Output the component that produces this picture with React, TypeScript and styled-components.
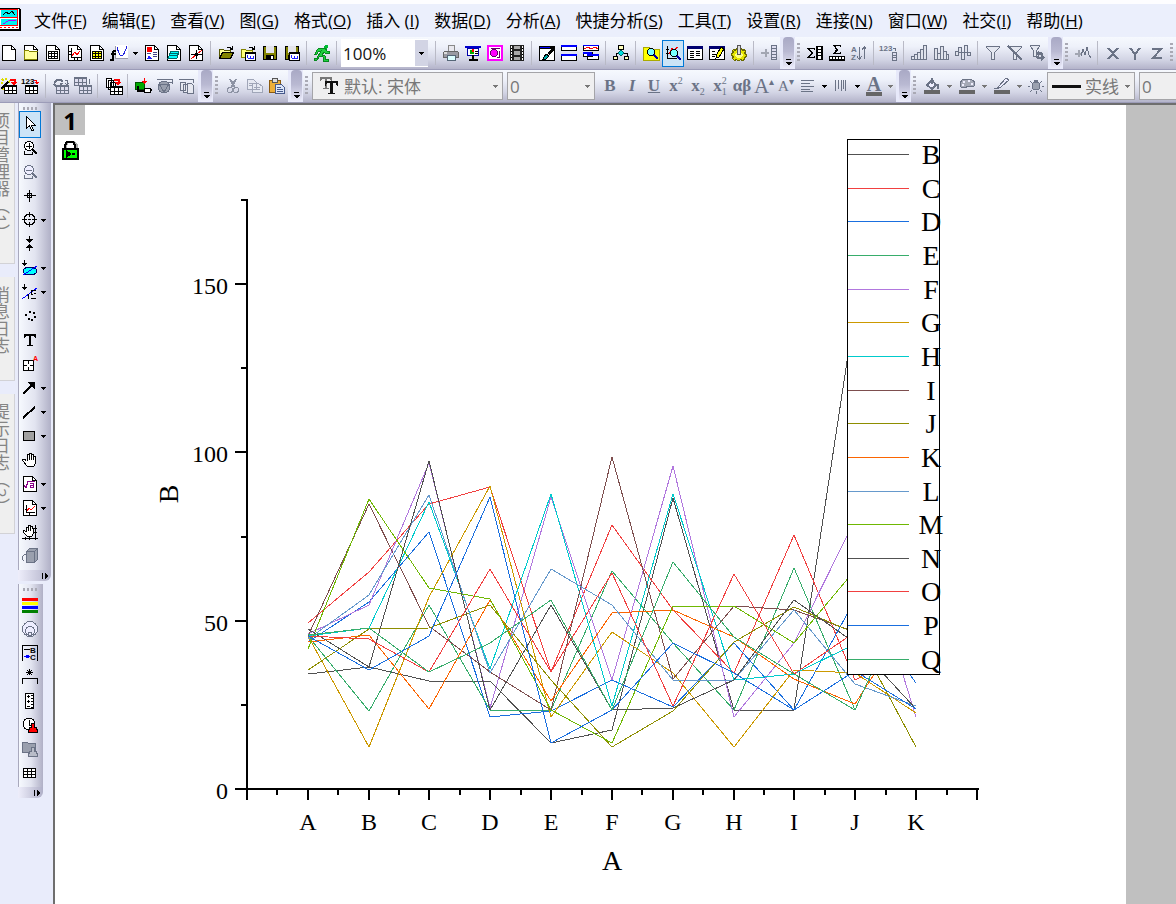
import React from "react";
import styled, { createGlobalStyle, css } from "styled-components";

const Global = createGlobalStyle`
  * { box-sizing: border-box; }
  html, body { margin: 0; padding: 0; }
  body { background: #e9ecfb; overflow: hidden; }
  button, select { font: inherit; color: inherit; margin: 0; }
`;

const UI_FONT = `"Open Sans", "Noto Sans CJK SC", sans-serif`;
const GREY = "#6b7386";
const INK = "#000";

/* ---------- icons ---------- */

type PProps = { d: string; f?: string; s?: string; w?: number };
const P = ({ d, f = "none", s = "none", w = 1 }: PProps) => (
  <path d={d} fill={f} stroke={s} strokeWidth={w} />
);
const L = ({ d, s = INK, w = 1 }: { d: string; s?: string; w?: number }) => <P d={d} s={s} w={w} />;
const T = ({ x, y, size, c = INK, children }: { x: number; y: number; size: number; c?: string; children: string }) => (
  <text x={x} y={y} fontSize={size} fill={c} fontWeight="bold" fontFamily="Liberation Sans, sans-serif">
    {children}
  </text>
);
const Doc = () => (
  <>
    <P d="M1.5.5h9l4 4v11h-13z" f="#fff" s={INK} />
    <L d="M10.5 1v3.500h4" />
  </>
);
const Floppy = () => (
  <>
    <P d="M1.500 1.500h13v13h-13z" f="#848400" s={INK} />
    <P d="M4 1h8v7H4z" f="#e4e4ea" />
    <P d="M4 10h8v5H4z" f={INK} />
    <P d="M9 11h2v3H9z" f="#fff" />
  </>
);
const Sheet = ({ x, y, c = INK, f = "#fff" }: { x: number; y: number; c?: string; f?: string }) => (
  <g transform={`translate(${x} ${y})`}>
    <P d="M.5.5h12v8h-12z" f={f} s={c} />
    <P d="M0 0h13v2H0z" f={c} />
    <L d="M4.500 0v8M8.500 0v8M0 5.500h12" s={c} />
  </g>
);
const BookGrid = ({ f }: { f: string }) => (
  <>
    <P d="M3.500 6.500h9v7h-9z" f={f} s={INK} />
    <L d="M6.500 6v8M9.500 6v8M3 8.500h10M3 11.500h10" />
  </>
);
const RedHook = () => (
  <>
    <L d="M9 1.500h4.500V5" s="#f00" w={2} />
    <P d="M10 4h6l-3 4z" f="#f00" />
  </>
);
const Lens = ({ x, y }: { x: number; y: number }) => (
  <>
    <circle cx={x} cy={y} r={3.500} fill="#7ff" stroke={INK} />
    <L d={`M${x + 3} ${y + 3}l4 4`} s="#0000a0" w={2} />
  </>
);
const MiniWindow = () => (
  <>
    <P d="M5.500 7.500h10v8h-10z" f="#fff" s={INK} />
    <P d="M5 7h11v2H5z" f={INK} />
    <L d="M7.500 13.500h6M7.500 10v3M10.500 11v2M13.500 11v2" s="#22f" />
  </>
);
const Stamp = ({ c, f }: { c: string; f: string }) => (
  <P d="M9.500 6.500h3v4h2v2h1v3h-9v-3h1v-2h2z" f={f} s={c} />
);

const ICONS: Record<string, React.ReactNode> = {
  newDoc: <Doc />,
  newFolder: (<><Doc /><P d="M1.500 5.500h4l1 1h8v8h-13z" f="#ffff9c" s="#848400" /><L d="M1.500 15.500h13v-9" /></>),
  newBook: (<><Doc /><BookGrid f="#fff" /></>),
  newGraph: (<><Doc /><L d="M4.500 3v9.500h9M2 6.500h2M2 9.500h2M7.500 13v2M10.500 13v2" /><L d="M5 11l3-4 2 3 3-4" s="#f00" /></>),
  newMatrix: (<><Doc /><BookGrid f="#ff0" /></>),
  newFunc: (<><P d="M4 0h13v13H4z" f="#fff" /><L d="M4.500 1v12.500h12" s="#99a" /><L d="M6 2c3 12 6 12 10-1" s="#2020e0" /><L d="M5 8.500H0M5 5.500H3l-1 1v8H-1" w={2} /></>),
  report: (<><Doc /><P d="M3 2h5v5H3z" f="#f00" /><P d="M3 14l2-4 3 4z" f="#22f" /><L d="M9 7.500h4M9 9.500h4M9 11.500h4M3 8.500h4" s="#448" /></>),
  layout: (<><Doc /><P d="M5 6h8l-2 7H2z" f="#0ff" s="#066" /><L d="M4 8.500h8M4 10.500h7" s="#066" /></>),
  notes: (<><Doc /><L d="M3 9.500h11M8.500 5v9" /><L d="M3 14L14 5" s="#f00" /><P d="M7 8h3v3H7z" f="#000" /></>),
  open: (<><P d="M1.500 4.500h4l1 1h6v2h-8l-3 6z" f="#ff9" s="#550" /><P d="M4.500 7.500h11l-3 6h-11z" f="#848400" s={INK} /><L d="M9 2.500h2l3 1M14.500 1v3h-3" /></>),
  openTpl: (<><P d="M1.500 4.500h4l1 1h6v7h-11z" f="#ffff7a" s="#848400" /><L d="M9 2.500h2l3 1M14.500 1v3h-3" /><MiniWindow /></>),
  save: <Floppy />,
  saveAs: (<><Floppy /><MiniWindow /></>),
  run: (
    <>
      <circle cx={12} cy={2} r={2} fill="#0b3" />
      <P d="M5 3h6l2 3h2v2h-4l-1-1-2 3 3 1v3h3v2h-5v-4l-3-1-3 4H0v-2h3l4-7-3 1-1 2H1l2-4z" f="#1fd040" s="#078a20" />
    </>
  ),
  printer: (<><P d="M5.500.500h6v6h-6z" f="#e8e8ee" s="#888" /><P d="M1.500 6.500h13l1 1v5H.500v-5z" f="#9a9aa2" s="#666" /><P d="M4 10h8v5H4z" f="#dff" s="#567" /><P d="M1 7h3v2H1z" f="#ddd" /></>),
  slide: (<><P d="M0 1h16v2H0z" f="#00c" /><P d="M2.500 3.500h11v7h-11z" f="#fff" s="#00a" /><P d="M5 5h4v4H5z" f="#0a0" /><P d="M7 4h2v3H7z" f="#f00" /><L d="M10 6.500h3M10 8.500h3" /><L d="M8 10v4M4 14.500h9" w={2} /></>),
  pink: (<><P d="M1 1h14v14H1z" f="#fff" s="#f0f" w={2} /><circle cx={7} cy={8} r={3.500} fill="#f0f" stroke="#606" /><L d="M4 3.500h9M12.500 6v7M10 12.500h3" s="#606" /></>),
  film: (<><P d="M1 0h14v16H1z" f="#222" /><P d="M5 1h6v3H5zM5 6h6v4H5zM5 12h6v3H5z" f="#aaa" /><L d="M2.500 1v14M13.500 1v14" s="#fff" /><L d="M2 3.500h1M2 6.500h1M2 9.500h1M2 12.500h1M13 3.500h1M13 6.500h1M13 9.500h1M13 12.500h1" /></>),
  brush: (<><P d="M.500 1.500h15v14H.500z" f="#fff" s={INK} /><P d="M0 1h16v3H0z" f={INK} /><L d="M1 2.500h10" s="#00f" /><P d="M14 3l2 1-6 6-2-2z" f="#000" /><P d="M4 14l3-5 3 2-3 3z" f="#0aa" s={INK} /></>),
  split: (<><P d="M.500.500h15v5H.500zM.500 9.500h15v6H.500z" f="#fff" s={INK} /><P d="M0 0h16v2H0zM0 9h16v2H0z" f="#00f" /></>),
  multi: (<><P d="M.500.500h15v5H.500zM.500 7.500h9v4h-9zM4.500 9.500h11v5h-11z" f="#fff" s={INK} /><P d="M0 0h16v1H0zM0 7h9v2H0zM4 9h12v2H4z" f="#00f" /><L d="M1 4l4-2 3 2 4-2 3 2" s="#f00" /></>),
  tree: (<><L d="M8 4v4M3 12V8.500h11V12" /><P d="M5.500.500h5v4h-5zM.500 11.500h4v3h-4zM11.500 11.500h4v3h-4z" f="#ffb" s={INK} /><P d="M8 5l3 3-3 3-3-3z" f="#0dd" s="#066" /></>),
  zoomFolder: (<><P d="M0 2h6l1 2h9v11H0z" f="#ff0" s="#aa0" /><Lens x={8} y={7} /></>),
  zoomGraph: (<><L d="M2.500 1v12.500h9M1 4.500h3M1 8.500h3" /><L d="M4 9l3-6 2 2 4-3" s="#f00" /><Lens x={9} y={8} /></>),
  list: (<><P d="M.500 1.500h15v13H.500z" f="#fff" s={INK} /><P d="M0 1h16v3H0z" f="#000070" /><L d="M3 6.500h4M9 6.500h4M3 8.500h4M9 8.500h4M3 10.500h4M9 10.500h4M3 12.500h4" /></>),
  edit: (<><P d="M.500 1.500h15v13H.500z" f="#fff" s={INK} /><P d="M0 1h16v3H0z" f="#000070" /><L d="M3 6.500h3M3 9.500h4M3 11.500h3" /><P d="M12 2l3 2-5 8-3 1 1-4z" f="#ff0" s={INK} /></>),
  gear: (<><P d="M2.500 4.500l2 1 1-2h5l1 2 2-1 1 2-1 2 2 1v2l-2 1v2l-2 1-2-1-1 1h-2l-1-1-2 1-2-2 1-2-2-1v-2l2-1-1-2z" f="#e6e600" s="#6a6a00" /><P d="M5 8h6l1 2-2 3H6l-2-2z" f="#ffff80" /><P d="M6.500.500h3v9h-3z" f="#ddd" s="#555" /></>),
  addCol: (<><L d="M0 7.500h8M4.500 4v8" s="#a2a6b2" w={2} /><P d="M10.500.500h5v14h-5z" f="#dde" s={GREY} /><L d="M10 3.500h5M10 6.500h5M10 9.500h5M10 12.500h5" s={GREY} /></>),
  sumCol: (<><L d="M7.500 5V3.500H1l4 4.500-4 4.500h6.500V11M1.500 3l4 5-4 5" /><P d="M10.500 1.500h4v13h-4z" f="#fff" s={INK} /><L d="M9.500 1v14M10 4.500h5M10 7.500h5M10 10.500h5M15.500 1v14" /></>),
  sumRow: (<><L d="M11.500 2V.500H4.500L8 4.500 4.500 8.500h7V7M5.500 1l3.500 4-3.500 4" /><P d="M.500 11.500h15v3H.500z" f="#fff" s={INK} /><L d="M0 15.500h16M3.500 11v4M6.500 11v4M9.500 11v4M12.500 11v4" /></>),
  sort: (<><T x={0} y={7} size={8} c={GREY}>A</T><T x={0} y={15} size={8} c={GREY}>Z</T><L d="M8.500 2v12M6 11.500l2.500 3 2-3M13.500 14V2M11 4.500L13.500 2l2 2.500" s={GREY} /></>),
  numCol: (<><T x={-2} y={6} size={8} c={GREY}>123</T><L d="M12 3.500h2V6" s={GREY} /><P d="M11.500 7.500h4v8h-4z" f="#dde" s={GREY} /><L d="M11 10.500h4M11 12.500h4" s={GREY} /></>),
  bars1: (<P d="M.500 11.500h3v3h-3zM3.500 9.500h3v5h-3zM6.500 7.500h3v7h-3zM9.500 4.500h3v10h-3zM12.500.500h3v14h-3z" f="#dfe2ec" s={GREY} />),
  bars2: (<P d="M1.500 3.500h3v11h-3zM4.500 8.500h3v6h-3zM7.500 1.500h3v13h-3zM10.500 6.500h3v8h-3zM13.500 9.500h2v5h-2z" f="#dfe2ec" s={GREY} />),
  bars3: (<P d="M.500 6.500h3v4h-3zM3.500 2.500h3v5h-3zM6.500 7.500h3v7h-3zM9.500.500h3v7h-3zM12.500 7.500h3v3h-3z" f="#dfe2ec" s={GREY} />),
  filter: (<P d="M1.500 1.500h13v1l-5 5v7h-3v-7l-5-5z" f="#e4e7f0" s={GREY} />),
  filterOff: (<><P d="M1.500 1.500h13v1l-5 5v7h-3v-7l-5-5z" f="#e4e7f0" s={GREY} /><L d="M1 1l14 14" s={GREY} w={2} /></>),
  filterGo: (<><P d="M1.500.500h9v1l-3 4v6h-3v-6l-3-4z" f="#e4e7f0" s={GREY} /><P d="M7 8l3-3v2h2l2 2v2h-2l-1-1h-1v2zM16 12l-4 4v-2H8l-2-3h3l1 1h2v-3z" f={GREY} /></>),
  addCurve: (<><L d="M0 8.500h7M3.500 5v7" s="#a2a6b2" w={2} /><L d="M6 11l2-7 2 6 2-8 2 8 2 3" s={GREY} /></>),
  axX: <L d="M3 3l10 11M13 3L3 14" s={GREY} w={2} />,
  axY: <L d="M3 3l5 6 5-6M8 8v7" s={GREY} w={2} />,
  axZ: <L d="M3 4h9L4 13h9" s={GREY} w={2} />,
  wand: (<><L d="M1 1l2 2M5 0v2M0 5h2M9 3L6 5M3 10l-2 2" s="#dd0" w={2} /><L d="M0 11l7-7" w={2} /><RedHook /><Sheet x={3} y={7} /></>),
  imp123: (<><T x={-2} y={6} size={8}>123</T><L d="M11 2.500h2.500V5" s="#f00" /><P d="M11 4h5l-2 3z" f="#f00" /><Sheet x={2} y={7} /></>),
  reimp: (<><L d="M1 5l3-3h4l2 2M9 5L7 8H3L1 6" s={GREY} w={2} /><L d="M12 2.500h2V7M12 5l2 2 2-2" s={GREY} /><Sheet x={3} y={7} c={GREY} f="#dde" /></>),
  clone: (<><Sheet x={-1} y={-1} c={GREY} f="#dde" /><L d="M14.500 1v5" s={GREY} /><Sheet x={4} y={7} c={GREY} f="#dde" /></>),
  batch: (<><P d="M1.500.500h5v9h-5zM3.500 2.500h5v9h-5zM5.500 4.500h5v9h-5z" f="#fff" s={INK} /><RedHook /><Sheet x={5} y={8} /></>),
  connect: (<><P d="M0 4h9v7H0z" f="#0a0" s="#050" /><L d="M9.500 0v5" s="#f00" /><P d="M7 3h5l-2.500 3z" f="#f00" /><P d="M9 10h6v4H9z" f="#fff" s={INK} /><L d="M3 8v4.500h6M15 12h2" w={2} /></>),
  globe: (<><circle cx={7} cy={9} r={6} fill="#9aa0ae" stroke={GREY} /><L d="M2 6l5 8 5-8zM0 1.500h15v4M12 4h4" s={GREY} /></>),
  copies: (<><P d="M1.500 4.500h5v8h-5zM4.500 6.500h5v8h-5z" f="#e6e8f0" s={GREY} /><P d="M8.500 5.500h4l2 2v8h-6z" f="#e6e8f0" s={GREY} /><L d="M0 1.500h14v3" s={GREY} /></>),
  cut: (<><L d="M5 1l5 9M11 1L6 10" s="#8d93a4" w={2} /><circle cx={5} cy={12} r={2.500} fill="none" stroke="#8d93a4" /><circle cx={11} cy={12} r={2.500} fill="none" stroke="#8d93a4" /></>),
  copy: (<><P d="M.500 1.500h6l3 3v7h-9zM5.500 5.500h6l4 3v6h-10z" f="#e6e9f2" s="#a0a6b8" /><L d="M2 5.500h5M2 7.500h3M7 9.500h6M7 11.500h6" s="#a0a6b8" /></>),
  paste: (<><P d="M.500 2.500h11v12h-11z" f="#ecae3a" s="#8a5a10" /><P d="M3.500.500h5v4h-5z" f="#ddd" s="#555" /><P d="M6.500 6.500h6l3 3v6h-9z" f="#dce6fa" s="#46598c" /><L d="M8 9.500h4M8 11.500h6M8 13.500h6" s="#46598c" /></>),
  align: <L d="M1 2.500h13M1 5.500h9M1 8.500h13M1 11.500h9M1 13.500h12" s={GREY} />,
  vlines: <L d="M2.500 2v11M5.500 2v9M8.500 2v11M10.500 2v9M12.500 2v11" s={GREY} />,
  fill: (<><P d="M3 7l5-5 4 5-4 4z" f="#eef" s={GREY} w={2} /><L d="M7.500 0v6M12.500 6c2 1 2 3 1 5" s={GREY} w={2} /><P d="M0 12h16v4H0z" f="#666" /></>),
  palette: (<><P d="M1 5l3-4h8l4 3-1 4-4 1-2-1-3 2-4-1z" f="#a4a9b6" s={GREY} /><P d="M4 3h2v2H4zM9 2h2v2H9zM12 5h2v2h-2zM3 6h2v2H3z" f="#eef" /><P d="M0 12h16v4H0z" f="#666" /></>),
  pen: (<><P d="M4 9l8-9 3 2-8 7z" f="#eef" s={GREY} /><L d="M0 10.500h5" s={GREY} /><P d="M0 12h16v4H0z" f="#666" /></>),
  bulb: (<><circle cx={8} cy={8} r={4} fill="#9ba1af" stroke={GREY} /><P d="M6 2h4v3H6z" f={GREY} /><L d="M8.500 13v3M0 8.500h2M14 8.500h2M2 3l2 2M14 3l-2 2M2 14l2-2M14 14l-2-2" s={GREY} /></>),
  tt: (<><P d="M0 0h12v4h-1l-1-2H7v9h2v1H3v-1h2V2H2L1 4H0z" f="#777" /><P d="M5 4h13v5h-1l-1-3h-3v10h2v1H8v-1h2V6H7L6 9H5z" f="#111" /></>),
  pointer: <P d="M4.500.500v12l3-3 2 5h2l-2-5h4z" f="#fff" s={INK} />,
  zoomIn: (<><circle cx={7} cy={6} r={4.500} fill="#fff" stroke={INK} /><L d="M4 6.500h6M7.500 3v6" /><L d="M10 9l5 5" w={2} /><L d="M2.500 11v3.500h8v-3" /></>),
  zoomOut: (<><circle cx={7} cy={6} r={4.500} fill="#eef" stroke={GREY} /><L d="M4 6.500h6" s={GREY} /><L d="M10 9l5 5" s={GREY} w={2} /><L d="M2.500 11v3.500h8v-3" s={GREY} /></>),
  cross: (<><L d="M2 7.500h12M7.500 2v12" /><P d="M5.500 5.500h4v4h-4z" s={INK} /></>),
  target: (<><circle cx={7.500} cy={7.500} r={5.500} fill="none" stroke={INK} /><L d="M0 7.500h5M10 7.500h5M7.500 0v5M7.500 10v5M6 7.500h3" /></>),
  arrows: (<><L d="M7.500 0v5M7.500 11v4" /><P d="M4 3h7L7.500 7zM4 12h7L7.500 8z" f={INK} /></>),
  ellipse: (<><ellipse cx={8} cy={11} rx={7} ry={4} fill="#0ff" stroke="#006" /><L d="M1 15L15 6" s="#00f" /><L d="M2.500 0v5" /><P d="M-1 3h7L2.500 6z" f={INK} /></>),
  mask: (<><L d="M0 15L15 4" s="#00f" /><L d="M2.500 0v5M6 9.500v5M9.500 6v5M9 6.500h5M9 10.500h2M12 9.500h2M9 14.500h5" /><P d="M-1 3h7L2.500 6z" f={INK} /></>),
  dots: <P d="M3 6h2v2H3zM7 3h2v2H7zM11 4h2v2h-2zM12 8h2v2h-2zM6 10h2v2H6zM9 11h2v2H9z" f={INK} />,
  text: (<P d="M2 2h12v4h-1l-1-2H9v9h2v1H5v-1h2V4H4L3 6H2z" f={INK} />),
  note: (<><P d="M1.500 4.500h10v10h-10z" f="#fff" s={INK} /><L d="M6.500 5v3M6.500 11v3M2 9.500h3M8 9.500h3" /><T x={11} y={5} size={7} c="#f00">A</T></>),
  arrow: (<><L d="M1 14l9-9" w={2} /><P d="M6 2h6v6z" f={INK} /><P d="M6 2h6v6z" s={INK} /></>),
  line: <L d="M1 14L13 3" w={2} />,
  rect: <P d="M1.500 3.500h11v9h-11z" f="#a0a0a0" s={INK} />,
  hand: <P d="M5.500 8.500v-6h2v-1h2v1h2v2h2v7l-2 3h-6l-5-6v-1h2l2 1M7.500 3v5M9.500 2v6M11.500 3v5" f="#fff" s={INK} />,
  sqrt: (<><Doc /><L d="M2 9l2 3 2-7h7" s="#808" /><L d="M8 7.500h3v4H8v-2h3" s="#808" /></>),
  docGraph: (<><Doc /><L d="M4.500 5v7.500h8M4 9.500h-1M7.500 13v2" /><L d="M5 11l2-3 2 2 4-4" s="#f00" /></>),
  handAxis: (<><P d="M4.500 7.500v-4h2v-2h2v1h2v2h1v5l-2 3h-4l-4-4v-2zM6.500 4v3M8.500 3v4" f="#fff" s={INK} /><L d="M0 14.500h16M13.500 1v15M11 4.500h4M11 8.500h4M3.500 13v3M7.500 13v3" /></>),
  cube: (<><P d="M4.500 3.500l3-3h8v11l-3 3h-8z" f="#9aa0ae" s={GREY} /><L d="M4.500 3.500h8l3-3M12.500 3.500v11M4 7c-4-1-5 4-2 6" s={GREY} /></>),
  colors: (<><P d="M0 1h16v3H0z" f="#f00" /><P d="M0 5h16v3H0z" f="#ff0" /><P d="M0 9h16v3H0z" f="#00f" /><P d="M0 13h16v3H0z" f="#008000" /></>),
  rings: (<><circle cx={8} cy={8} r={7.500} fill="#eef" stroke={GREY} /><circle cx={8} cy={10} r={4.500} fill="none" stroke={GREY} /><circle cx={8} cy={13} r={2} fill="none" stroke={GREY} /></>),
  legend: (<><L d="M.500 16V.500h15V16M2 4.500h6" /><L d="M2 11.500h6" s="#00f" /><P d="M4 10h3v3H4z" f="#00f" /><T x={8} y={8} size={8}>B</T><T x={8} y={15} size={8}>C</T></>),
  star: (<L d="M7.500 0v6M4 3.500h7M5 1l5 5M10 1L5 6M.500 15v-5.500h15V15" />),
  scale: (<><P d="M3.500.500h8v15h-8z" f="#fff" s={INK} /><L d="M5 3.500h3M6.500 2v3M5 8.500h3M6.500 7v3M5 13h3M9 2.500h2M9 5.500h2M9 8.500h2M9 11.500h2M9 14h2" /></>),
  clock: (<><circle cx={7} cy={7} r={6} fill="#fff" stroke={INK} /><L d="M7.500 3v5h3" /><Stamp c="#000" f="#f00" /></>),
  folderStamp: (<><P d="M.500 1.500h5l1 1h7v9H.500z" f="#9aa0ae" s={GREY} /><Stamp c={GREY} f="#b8bcc8" /></>),
  table: (<><P d="M1.500 3.500h12v9h-12z" f="#fff" s={INK} /><L d="M1 6.500h13M1 9.500h13M5.500 3v10M9.500 3v10" /></>),
};

const Glyph = styled.svg`
  display: block;
  flex: none;
  overflow: visible;
`;
const Icon = ({ name, size = 16 }: { name: string; size?: number }) => (
  <Glyph width={size} height={size} viewBox={`0 0 ${size} ${size}`} shapeRendering="crispEdges" aria-hidden>
    {ICONS[name]}
  </Glyph>
);

/* ---------- shell ---------- */

const Shell = styled.div`
  display: flex;
  flex-direction: column;
  height: 100vh;
  overflow: hidden;
  background: #e9ecfb;
  font-family: ${UI_FONT};
  font-size: 17px;
`;
const MenuBar = styled.nav`
  display: flex;
  flex: none;
  gap: 15px;
  height: 37px;
  padding-left: 34px;
  border-top: 4px solid #fdfdff;
  background: #ebeffc;
  position: relative;
`;
const AppMark = styled.svg`
  position: absolute;
  left: 0;
  top: 4px;
`;
const MenuItem = styled.button`
  flex: none;
  padding: 0;
  border: 0;
  background: none;
  color: #000;
  white-space: pre;
  line-height: 32px;
`;
const Row = styled.div`
  display: flex;
  flex: none;
  height: 33px;
  background: #e7e9fa;
  border-bottom: 1px solid #9c9cb8;
`;
/* the leading strip of a row slides 2px under the window edge */
const Strip = styled.div<{ $grow?: boolean; $first?: boolean }>`
  display: flex;
  flex: ${(p) => (p.$grow ? "1 0 auto" : "none")};
  align-items: center;
  height: 32px;
  margin-left: ${(p) => (p.$first ? "-2px" : "0")};
  background: linear-gradient(#f6f9fe 0%, #eef1fa 30%, #d3d5e5 70%, #b4b4ca 100%);
`;
const Cap = styled.button`
  display: flex;
  flex: none;
  align-items: flex-end;
  justify-content: center;
  width: 11px;
  height: 32px;
  padding: 0 0 3px;
  margin: 0 1px 0 3px;
  border: 0;
  border-radius: 4px 4px 6px 0;
  background: linear-gradient(#a9a9c5 0%, #b9b9d2 45%, #ededfb 100%);
`;
const Overflow = ({ label }: { label: string }) => (
  <Cap aria-label={label}>
    <svg width="7" height="7" viewBox="0 0 7 7" shapeRendering="crispEdges" aria-hidden>
      <path d="M1 0h5v1H1zM1 3h6L4 7z" fill="#000" />
    </svg>
  </Cap>
);
const Grip = styled.i<{ $flat?: boolean }>`
  flex: none;
  width: ${(p) => (p.$flat ? "16px" : "3px")};
  height: ${(p) => (p.$flat ? "3px" : "20px")};
  margin: ${(p) => (p.$flat ? "0" : "0 4px 0 2px")};
  background: ${(p) =>
    p.$flat
      ? "repeating-linear-gradient(90deg, #a9a9b4 0 2px, transparent 2px 4px)"
      : "repeating-linear-gradient(#a9a9b4 0 2px, transparent 2px 4px)"};
`;
const Sep = styled.i`
  flex: none;
  width: 1px;
  height: 24px;
  margin: 0 4px 0 3px;
  background: #b9bac6;
`;
const ToolButton = styled.button<{ $on?: boolean; $wide?: boolean }>`
  display: flex;
  flex: none;
  align-items: center;
  justify-content: center;
  width: ${(p) => (p.$wide ? "24px" : "22px")};
  height: 27px;
  padding: 0;
  border: 1px solid transparent;
  background: none;
  color: ${GREY};
  ${(p) =>
    p.$on &&
    css`
      border-color: #0078d7;
      background: #cce4f7;
    `}
`;
const DropButton = styled.button<{ $slim?: boolean }>`
  display: flex;
  flex: none;
  align-items: center;
  justify-content: center;
  width: ${(p) => (p.$slim ? "5px" : "11px")};
  height: 24px;
  padding: 0;
  border: 0;
  background: none;
`;
const Drop = ({ label, c = "#000", slim }: { label: string; c?: string; slim?: boolean }) => (
  <DropButton aria-label={`${label}选项`} $slim={slim}>
    <svg width="5" height="3" viewBox="0 0 5 3" shapeRendering="crispEdges" aria-hidden>
      <path d="M0 0h5L2.500 3z" fill={c} />
    </svg>
  </DropButton>
);
const Tool = ({ i, l, on, wide }: { i: string; l: string; on?: boolean; wide?: boolean }) => (
  <ToolButton aria-label={l} $on={on} $wide={wide}>
    <Icon name={i} />
  </ToolButton>
);

const ComboBox = styled.label<{ $w: number; $off?: boolean }>`
  display: flex;
  flex: none;
  align-items: center;
  width: ${(p) => p.$w}px;
  height: 28px;
  margin-right: 4px;
  background: ${(p) => (p.$off ? "#efeff0" : "#fff")};
  border: ${(p) => (p.$off ? "1px solid #a4a4a8" : "0")};
  color: ${(p) => (p.$off ? "#777" : "#111")};

  select {
    flex: 1;
    min-width: 0;
    height: 26px;
    padding: 0 2px;
    border: 0;
    outline: 0;
    appearance: none;
    background: transparent;
    opacity: 1;
    color: inherit;
  }
`;
const ComboArrow = styled.span<{ $off?: boolean }>`
  display: flex;
  flex: none;
  align-items: center;
  justify-content: center;
  width: 13px;
  height: 26px;
  background: ${(p) => (p.$off ? "none" : "#d2d4e4")};
`;
const Sample = styled.span`
  flex: none;
  width: 29px;
  height: 3px;
  margin: 0 2px 0 4px;
  background: #111;
`;
const TTBox = styled.span`
  padding: 0 4px 0 7px;
`;
type ComboProps = { w: number; l: string; v: string; off?: boolean; lead?: React.ReactNode };
const Combo = ({ w, l, v, off, lead }: ComboProps) => (
  <ComboBox $w={w} $off={off}>
    {lead}
    <select aria-label={l} disabled={off} defaultValue={v}>
      <option>{v}</option>
    </select>
    <ComboArrow $off={off}>
      <svg width="5" height="3" viewBox="0 0 5 3" shapeRendering="crispEdges" aria-hidden>
        <path d="M0 0h5L2.500 3z" fill={off ? "#777" : "#000"} />
      </svg>
    </ComboArrow>
  </ComboBox>
);

const LetterButton = styled(ToolButton)<{ $size: number; $thin?: boolean }>`
  font-family: "Liberation Serif", serif;
  font-size: ${(p) => p.$size}px;
  font-weight: ${(p) => (p.$thin ? 400 : 700)};
  line-height: 20px;

  span { white-space: nowrap; }
  sup, sub { font-size: 10px; line-height: 0; font-weight: 400; }
  sup + sub { margin-left: -5px; }
`;
type LetterProps = { l: string; size?: number; thin?: boolean; children: React.ReactNode };
const Letter = ({ l, size = 17, thin, children }: LetterProps) => (
  <LetterButton aria-label={l} $size={size} $thin={thin}>
    <span>{children}</span>
  </LetterButton>
);
const Underbar = styled.b`
  display: block;
  width: 16px;
  height: 19px;
  line-height: 15px;
  text-align: center;
  border-bottom: 4px solid #666;
`;

/* ---------- left docks ---------- */

const Body = styled.div`
  display: flex;
  flex: 1;
  min-height: 0;
`;
const TabDock = styled.aside`
  display: flex;
  flex: none;
  flex-direction: column;
  gap: 13px;
  width: 18px;
`;
const SideTab = styled.button<{ $h: number }>`
  display: flex;
  align-items: flex-start;
  justify-content: flex-end;
  width: 15px;
  height: ${(p) => p.$h}px;
  padding: 9px 5px 0 0;
  overflow: hidden;
  border: solid #d2d2d6;
  border-width: 0 1px 1px 0;
  background: #efefef;
  color: #858585;

  span {
    flex: none;
    writing-mode: vertical-rl;
    line-height: 17px;
    white-space: pre;
  }
`;
const Docks = styled.aside`
  display: flex;
  flex: none;
  flex-direction: column;
  align-items: flex-start;
  width: 35px;
`;
const Palette = styled.div<{ $w: number }>`
  display: flex;
  flex-direction: column;
  width: ${(p) => p.$w}px;
  padding: 4px 0 2px;
  border-left: 1px solid #a9a9bd;
  background: linear-gradient(90deg, #f6f9fe 0%, #e2e4f0 50%, #b0b0c6 100%);
`;
const PaletteGrip = styled.div`
  padding: 0 0 2px 4px;
  display: flex;
`;
const PaletteRow = styled.div`
  display: flex;
  align-items: center;
  height: 24px;
`;
const PaletteEnd = styled.button<{ $w: number }>`
  display: flex;
  align-items: center;
  justify-content: flex-end;
  width: ${(p) => p.$w}px;
  height: 11px;
  padding: 0 2px;
  margin-bottom: 3px;
  border: 0;
  border-radius: 0 0 6px 0;
  background: linear-gradient(90deg, #eeeefb, #b0b0c8);
`;
const EndMark = () => (
  <svg width="7" height="6" viewBox="0 0 7 6" shapeRendering="crispEdges" aria-hidden>
    <path d="M0 0h1v6H0zM3 0l3 3-3 3z" fill="#000" />
  </svg>
);

type PTool = [string, string, boolean?];
const TOOLS: PTool[] = [
  ["pointer", "指针"], ["zoomIn", "放大"], ["zoomOut", "缩小"], ["cross", "屏幕读取"],
  ["target", "数据读取", true], ["arrows", "数据选择"], ["ellipse", "区域选择", true],
  ["mask", "屏蔽", true], ["dots", "绘制数据"], ["text", "文本"], ["note", "注释"],
  ["arrow", "箭头", true], ["line", "直线", true], ["rect", "矩形", true], ["hand", "平移"],
  ["sqrt", "插入公式", true], ["docGraph", "插入图形", true], ["handAxis", "缩放平移"], ["cube", "旋转"],
];
const GRAPH_TOOLS: PTool[] = [
  ["colors", "颜色"], ["rings", "同心"], ["legend", "图例"], ["star", "星号括号"],
  ["scale", "比例"], ["clock", "日期时间"], ["folderStamp", "项目路径"], ["table", "新表格"],
];

/* ---------- graph page ---------- */

const Workspace = styled.main`
  flex: 1;
  min-width: 0;
  padding-right: 50px;
  overflow: hidden;
  border: solid #6e6e6e;
  border-width: 2px 0 0 2px;
  background: #c0c0c0;
`;
const Page = styled.section`
  position: relative;
  height: 100%;
  overflow: hidden;
  background: #fff;
`;
const LayerTag = styled.button`
  position: absolute;
  left: 0;
  top: 0;
  width: 30px;
  height: 30px;
  padding: 0;
  border: 0;
  background: #c0c0c0;
  color: #000;
  font: bold 24px/32px "Open Sans", sans-serif;
`;
const Lock = styled.svg`
  position: absolute;
  left: 7px;
  top: 36px;
`;
const Chart = styled.svg`
  display: block;
  font-family: "Liberation Serif", "Noto Sans CJK SC", serif;
`;

const DARK = "#515151", RED = "#f14040", BLUE = "#1a6fdf", GREEN = "#37ad6b";
/* one row per curve: name, colour, line height at each category A..K */
const SERIES: [string, string, number[]][] = [
  ["B", DARK, [674, 667, 681, 681, 743, 730, 498, 710, 710, 309, 500]],
  ["C", RED, [623, 572, 504, 487, 672, 525, 610, 673, 535, 680, 647]],
  ["D", BLUE, [642, 602, 532, 717, 711, 680, 707, 643, 710, 600, 683]],
  ["E", GREEN, [636, 711, 605, 710, 710, 571, 643, 710, 568, 710, 573]],
  ["F", "#b177de", [634, 605, 463, 708, 497, 680, 466, 717, 643, 520, 717]],
  ["G", "#cc9900", [636, 747, 597, 486, 717, 632, 673, 747, 670, 673, 713]],
  ["H", "#00cbcc", [636, 628, 502, 669, 494, 706, 494, 680, 674, 644, 620]],
  ["I", "#7d4e4e", [636, 504, 626, 672, 710, 457, 679, 606, 610, 632, 620]],
  ["J", "#8e8e00", [670, 629, 628, 605, 680, 747, 711, 642, 607, 633, 747]],
  ["K", "#fb6501", [642, 635, 709, 600, 701, 613, 610, 637, 679, 704, 609]],
  ["L", "#6699cc", [639, 595, 495, 673, 569, 605, 680, 680, 610, 684, 706]],
  ["M", "#6fb802", [649, 499, 588, 599, 710, 743, 606, 606, 643, 570, 640]],
  ["N", DARK, [629, 667, 461, 710, 605, 710, 708, 680, 600, 643, 709]],
  ["O", RED, [636, 639, 672, 569, 672, 573, 706, 574, 674, 632, 600]],
  ["P", BLUE, [636, 670, 636, 497, 743, 710, 643, 673, 710, 671, 709]],
  ["Q", GREEN, [635, 628, 672, 643, 600, 710, 562, 637, 674, 710, 573]],
];
const tickX = (k: number) => Math.round(247 + k * 60.83);
const CATEGORIES = "ABCDEFGHIJK".split("");
const Y_TICKS: [number, string][] = [[284, "150"], [452, "100"], [621, "50"], [789, "0"]];
const Y_MINOR = [200, 368, 537, 705];

const LineChart = () => (
  <Chart width="1071" height="799" viewBox="55 105 1071 799" role="img" aria-label="折线图">
    <g shapeRendering="crispEdges" stroke="#000" strokeWidth="2" fill="none">
      <path d="M247 199V800M235 789H979" />
      {Y_TICKS.map(([y]) => <path key={y} d={`M235 ${y}H247`} />)}
      {Y_MINOR.map((y) => <path key={y} d={`M241 ${y}H247`} />)}
      {Array.from({ length: 12 }, (_, k) => (
        <path key={k} d={`M${tickX(k + 1)} 789V800M${tickX(k + 0.5)} 789V795`} />
      ))}
    </g>
    <g shapeRendering="crispEdges" fill="none">
      {SERIES.map(([name, color, ys]) => (
        <polyline key={name} stroke={color} points={ys.map((y, k) => `${tickX(k + 1)},${y}`).join(" ")} />
      ))}
    </g>
    <g fontSize="24">
      {Y_TICKS.map(([y, t]) => <text key={t} x="228" y={y + 10} textAnchor="end">{t}</text>)}
      {CATEGORIES.map((c, k) => <text key={c} x={tickX(k + 1)} y="830" textAnchor="middle">{c}</text>)}
    </g>
    <g fontSize="28" textAnchor="middle">
      <text x="612" y="870">A</text>
      <text transform="translate(178 494) rotate(-90)">B</text>
    </g>
    <rect x="847.500" y="139.500" width="92" height="535" fill="#fff" stroke="#000" shapeRendering="crispEdges" />
    {SERIES.map(([name, color], i) => {
      const y = Math.round(154 + i * 33.65);
      return (
        <g key={name}>
          <path d={`M848 ${y + 0.5}H909`} stroke={color} shapeRendering="crispEdges" />
          <text x="931" y={y + 10} fontSize="28" textAnchor="middle">{name}</text>
        </g>
      );
    })}
  </Chart>
);

const MENUS: [string, string][] = [
  ["文件", "F"], ["编辑", "E"], ["查看", "V"], ["图", "G"], ["格式", "O"], ["插入 ", "I"],
  ["数据", "D"], ["分析", "A"], ["快捷分析", "S"], ["工具", "T"], ["设置", "R"],
  ["连接", "N"], ["窗口", "W"], ["社交", "I"], ["帮助", "H"],
];

export default function App() {
  return (
    <Shell>
      <Global />
      <MenuBar>
        <AppMark width="21" height="23" viewBox="0 0 21 23" shapeRendering="crispEdges" aria-hidden>
          <path d="M0 0h20v1h1v22H0z" fill="#000" />
          <path d="M0 1h19v20H0z" fill="#fff" />
          <path d="M1 2h16v7H1zM1 11h16v6H1z" fill="#00f0f0" />
          <path d="M0 1.500h17.500v16H0M0 9.500h17" stroke="#f00" fill="none" />
          <path d="M0 19.500h18" stroke="#f00" strokeDasharray="2 2" fill="none" />
          <path d="M3 7l3-3 3 2 3-3 3 4" stroke="#000" fill="none" />
          <path d="M3 16l5-3 8-1" stroke="#a0f" fill="none" />
        </AppMark>
        {MENUS.map(([t, k]) => (
          <MenuItem key={t}>{t}(<u>{k}</u>)</MenuItem>
        ))}
      </MenuBar>

      <Row>
        <Strip $first>
          <Tool i="newDoc" l="新建项目" />
          <Tool i="newFolder" l="新建文件夹" />
          <Tool i="newBook" l="新建工作簿" />
          <Tool i="newGraph" l="新建图" />
          <Tool i="newMatrix" l="新建矩阵" />
          <Tool i="newFunc" l="新建函数图" />
          <Drop label="新建函数图" />
          <Tool i="report" l="新建报告" />
          <Tool i="layout" l="新建布局" />
          <Tool i="notes" l="新建备注" />
          <Sep />
          <Tool i="open" l="打开" />
          <Tool i="openTpl" l="打开模板" />
          <Tool i="save" l="保存" />
          <Tool i="saveAs" l="保存模板" />
          <Sep />
          <Tool i="run" l="运行" />
          <Sep />
          <Combo w={87} l="缩放比例" v="100%" />
          <Sep />
          <Tool i="printer" l="打印" />
          <Tool i="slide" l="幻灯片" />
          <Tool i="pink" l="导出图" />
          <Tool i="film" l="视频" />
          <Sep />
          <Tool i="brush" l="主题" />
          <Tool i="split" l="拆分窗口" />
          <Tool i="multi" l="合并图" />
          <Sep />
          <Tool i="tree" l="层级" />
          <Sep />
          <Tool i="zoomFolder" l="项目管理器" />
          <Tool i="zoomGraph" l="对象管理器" on />
          <Tool i="list" l="结果日志" />
          <Tool i="edit" l="命令窗口" />
          <Tool i="gear" l="代码生成器" />
          <Sep />
          <Tool i="addCol" l="添加列" />
        </Strip>
        <Overflow label="标准工具栏选项" />
        <Strip>
          <Grip />
          <Tool i="sumCol" l="列统计" />
          <Tool i="sumRow" l="行统计" />
          <Tool i="sort" l="排序" />
          <Sep />
          <Tool i="numCol" l="填充行号" />
          <Sep />
          <Tool i="bars1" l="直方图一" />
          <Tool i="bars2" l="直方图二" />
          <Tool i="bars3" l="直方图三" />
          <Sep />
          <Tool i="filter" l="筛选" />
          <Tool i="filterOff" l="停用筛选" />
          <Tool i="filterGo" l="重新应用筛选" />
        </Strip>
        <Overflow label="工作表工具栏选项" />
        <Strip $grow>
          <Grip />
          <Tool i="addCurve" l="添加曲线" />
          <Sep />
          <Tool i="axX" l="设为X" />
          <Tool i="axY" l="设为Y" />
          <Tool i="axZ" l="设为Z" />
          <Grip />
        </Strip>
      </Row>

      <Row>
        <Strip $first>
          <Tool i="wand" l="导入向导" />
          <Tool i="imp123" l="导入数据" />
          <Sep />
          <Tool i="reimp" l="重新导入" />
          <Tool i="clone" l="克隆导入" />
          <Sep />
          <Tool i="batch" l="批量导入" />
          <Sep />
          <Tool i="connect" l="连接文件" />
          <Tool i="globe" l="连接网页" />
          <Tool i="copies" l="连接多个文件" />
        </Strip>
        <Overflow label="导入工具栏选项" />
        <Strip>
          <Grip />
          <Tool i="cut" l="剪切" />
          <Tool i="copy" l="复制" />
          <Tool i="paste" l="粘贴" />
        </Strip>
        <Overflow label="编辑工具栏选项" />
        <Strip>
          <Grip />
          <Combo w={191} l="字体" v="默认: 宋体" off lead={<TTBox><Icon name="tt" size={18} /></TTBox>} />
          <Combo w={88} l="字号" v="0" off />
          <Letter l="粗体">B</Letter>
          <Letter l="斜体"><i>I</i></Letter>
          <Letter l="下划线"><u>U</u></Letter>
          <Letter l="上标">x<sup>2</sup></Letter>
          <Letter l="下标">x<sub>2</sub></Letter>
          <Letter l="上下标">x<sup>2</sup><sub>1</sub></Letter>
          <Letter l="希腊字母">αβ</Letter>
          <Letter l="增大字号" size={21} thin>A<sup>▴</sup></Letter>
          <Letter l="减小字号" size={15} thin>A<sup>▾</sup></Letter>
          <Tool i="align" l="对齐" />
          <Drop label="对齐" />
          <Tool i="vlines" l="行距" />
          <Drop label="行距" />
          <Letter l="字体颜色" size={20}><Underbar>A</Underbar></Letter>
          <Drop label="字体颜色" c="#777" />
        </Strip>
        <Overflow label="格式工具栏选项" />
        <Strip $grow>
          <Grip />
          <Tool i="fill" l="填充颜色" wide />
          <Drop label="填充颜色" c="#777" />
          <Tool i="palette" l="调色板" wide />
          <Drop label="调色板" c="#777" />
          <Tool i="pen" l="线条颜色" wide />
          <Drop label="线条颜色" c="#777" />
          <Tool i="bulb" l="光照" />
          <Combo w={88} l="线型" v="实线" off lead={<Sample />} />
          <Combo w={88} l="线宽" v="0" off />
        </Strip>
      </Row>

      <Body>
        <TabDock>
          <SideTab $h={161}><span>项目管理器（1）</span></SideTab>
          <SideTab $h={104}><span>消息日志</span></SideTab>
          <SideTab $h={140}><span>提示日志（2）</span></SideTab>
        </TabDock>
        <Docks>
          <Palette $w={33}>
            <PaletteGrip><Grip $flat /></PaletteGrip>
            {TOOLS.map(([i, l, drop], n) => (
              <PaletteRow key={i}>
                <Tool i={i} l={l} on={n === 0} />
                {drop && <Drop label={l} slim />}
              </PaletteRow>
            ))}
          </Palette>
          <PaletteEnd $w={33} aria-label="工具栏选项"><EndMark /></PaletteEnd>
          <Palette $w={25}>
            <PaletteGrip><Grip $flat /></PaletteGrip>
            {GRAPH_TOOLS.map(([i, l]) => (
              <PaletteRow key={i}><Tool i={i} l={l} /></PaletteRow>
            ))}
          </Palette>
          <PaletteEnd $w={25} aria-label="图形工具栏选项"><EndMark /></PaletteEnd>
        </Docks>
        <Workspace>
          <Page>
            <LineChart />
            <LayerTag>1</LayerTag>
            <Lock width="17" height="19" viewBox="0 0 17 19" shapeRendering="crispEdges" aria-hidden>
              <path d="M4 8V4l2-3h6l3 3v4" fill="none" stroke="#aaa" strokeWidth="2" />
              <path d="M3 8V4l2-3h6l2 3v4" fill="none" stroke="#000" strokeWidth="2" />
              <path d="M1 8h15v10H1z" fill="#0f0" stroke="#000" strokeWidth="2" />
              <path d="M4 9l6 4-6 4zM10 12h3v2h-3z" fill="#000" />
            </Lock>
          </Page>
        </Workspace>
      </Body>
    </Shell>
  );
}
